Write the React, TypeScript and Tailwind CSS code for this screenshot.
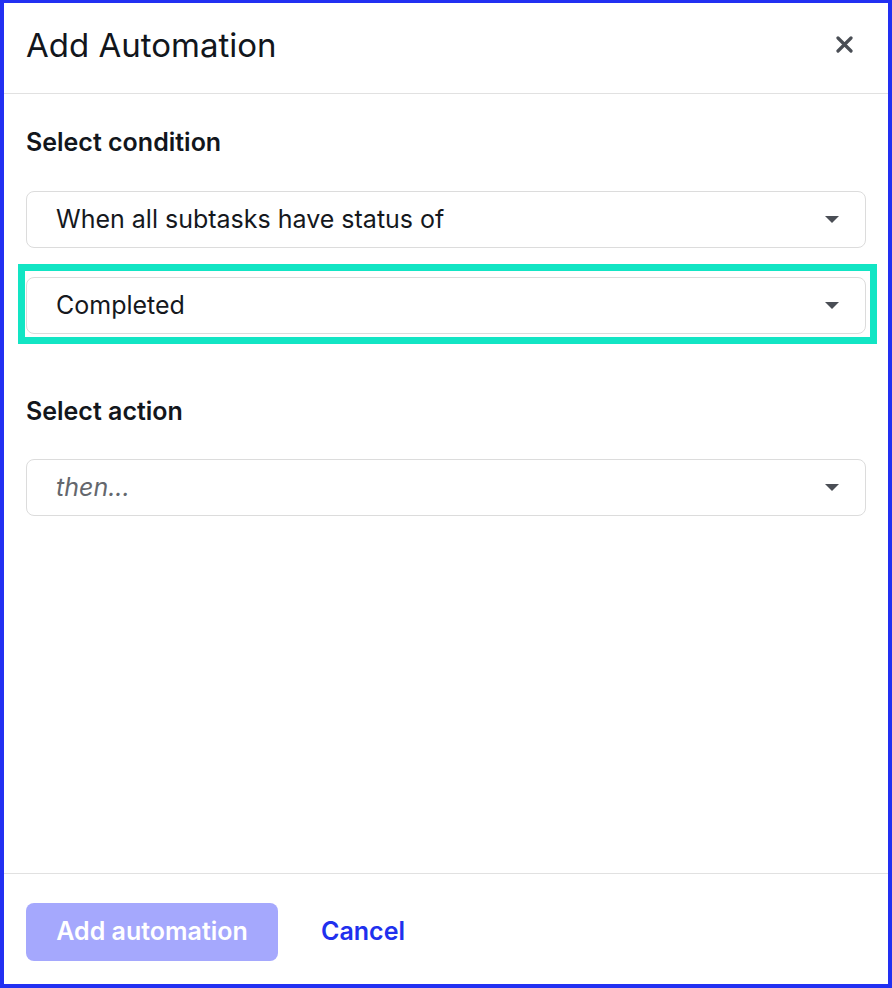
import React from "react";

function Caret() {
  return (
    <svg width="16" height="9" viewBox="0 0 16 9" className="shrink-0">
      <path d="M1 1 L15 1 L8 8 Z" fill="#4a4e55" />
    </svg>
  );
}

function Select({ children, placeholder = false }: { children: React.ReactNode; placeholder?: boolean }) {
  return (
    <div className="h-[57px] rounded-[8px] border border-[#dcdcdc] bg-white flex items-center justify-between pl-[29px] pr-[25px]">
      <span className={placeholder ? "text-[25px] italic text-[#64676d]" : "text-[25px] text-[#15181d]"}>{children}</span>
      <Caret />
    </div>
  );
}

export default function App() {
  return (
    <div
      className="w-[892px] h-[988px] bg-white border-[#2230f2] border-l-4 border-r-4 border-t-[3px] border-b-4 flex flex-col relative"
      style={{ fontFamily: "Inter, 'Noto Sans', sans-serif" }}
    >
      <div className="h-[91px] shrink-0 flex items-center justify-between pl-[22px] pr-[35px] pb-[7px] border-b border-[#e1e1e1]">
        <h1 className="text-[33px] text-[#12161c] font-normal leading-[40px]">Add Automation</h1>
        <svg width="17" height="17" viewBox="0 0 17 17">
          <path d="M2 2 L15 15 M15 2 L2 15" stroke="#4a4e55" strokeWidth="3.2" strokeLinecap="round" />
        </svg>
      </div>
      <div className="flex-1 px-[22px] pt-[33px]">
        <h2 className="text-[25px] font-semibold text-[#12161c] leading-[30px]">Select condition</h2>
        <div className="mt-[34px]">
          <Select>When all subtasks have status of</Select>
        </div>
        <div className="mt-[29px]">
          <Select>Completed</Select>
        </div>
        <h2 className="mt-[62px] text-[25px] font-semibold text-[#12161c] leading-[30px]">Select action</h2>
        <div className="mt-[33px]">
          <Select placeholder>then...</Select>
        </div>
      </div>
      <div className="h-[111px] shrink-0 border-t border-[#e1e1e1] flex items-center pl-[22px] pt-[6px] gap-[43px]">
        <button className="h-[58px] w-[252px] rounded-[8px] bg-[#a5a8fd] text-white text-[25px] font-semibold">
          Add automation
        </button>
        <button className="text-[25px] font-semibold text-[#2030ee]">Cancel</button>
      </div>
      <div className="absolute left-[14px] top-[261px] w-[859px] h-[80px] border-[7px] border-[#12e5c4] pointer-events-none" />
    </div>
  );
}
